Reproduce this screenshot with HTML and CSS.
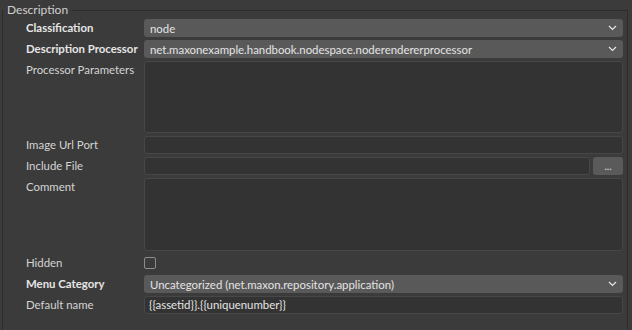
FILE: index.html
```html
<!DOCTYPE html>
<html lang="en">
<head>
<meta charset="UTF-8">
<meta name="viewport" content="width=device-width, initial-scale=1.0">
<link rel="stylesheet" href="styles.css">
</head>
<body>
    <fieldset class="group">
        <legend>Description</legend>
        <div class="form">
            <div class="label bold">Classification</div>
            <div class="select"><span>node</span><svg class="chev" width="9" height="6" viewBox="0 0 9 6"><polyline points="1,1 4.5,4.5 8,1" /></svg></div>

            <div class="label bold">Description Processor</div>
            <div class="select"><span>net.maxonexample.handbook.nodespace.noderendererprocessor</span><svg class="chev" width="9" height="6" viewBox="0 0 9 6"><polyline points="1,1 4.5,4.5 8,1" /></svg></div>

            <div class="label">Processor Parameters</div>
            <div class="area area-params"></div>

            <div class="label">Image Url Port</div>
            <div class="input"></div>

            <div class="label">Include File</div>
            <div class="file-row">
                <div class="input"></div>
                <div class="btn">...</div>
            </div>

            <div class="label">Comment</div>
            <div class="area area-comment"></div>

            <div class="label">Hidden</div>
            <div class="check-cell"><div class="check"></div></div>

            <div class="label bold">Menu Category</div>
            <div class="select"><span>Uncategorized (net.maxon.repository.application)</span><svg class="chev" width="9" height="6" viewBox="0 0 9 6"><polyline points="1,1 4.5,4.5 8,1" /></svg></div>

            <div class="label">Default name</div>
            <div class="input"><span>{{assetid}}.{{uniquenumber}}</span></div>
        </div>
    </fieldset>
</body>
</html>
```

FILE: styles.css
```css
body {
    margin: 0;
    height: 330px;
    overflow: hidden;
    background-color: #3b3b3b;
    color: #d9d9d9;
    font-family: Lato, "Noto Sans", Arial, sans-serif;
    font-size: 11.4px;
}

.group {
    margin: 3px 4px 0 2px;
    padding: 2px 4px 40px 23px;
    border: 1px solid #2c2c2c;
    min-width: 0;
}

.group legend {
    margin-left: -23px;
    padding: 0 4px;
    line-height: 14px;
    font-size: 12px;
    color: #cfcfcf;
}

.form {
    display: grid;
    grid-template-columns: 118px 479px;
    row-gap: 3px;
}

.label {
    height: 18px;
    line-height: 18px;
    white-space: nowrap;
    color: #d4d4d4;
}

.bold {
    font-weight: bold;
    color: #e6e6e6;
}

.select {
    height: 18px;
    background-color: #595959;
    border-radius: 3px;
    display: flex;
    align-items: center;
    justify-content: space-between;
    padding: 0 6px 0 6px;
    color: #e4e4e4;
    white-space: nowrap;
}

.chev polyline {
    fill: none;
    stroke: #e6e6e6;
    stroke-width: 1.2;
}

.input,
.area {
    box-sizing: border-box;
    background-color: #333333;
    border: 1px solid #474747;
    border-radius: 3px;
}

.input {
    height: 18px;
    line-height: 16px;
    padding: 0 4px;
    color: #e4e4e4;
}

.area-params {
    height: 72px;
}

.area-comment {
    height: 73px;
}

.file-row {
    display: flex;
    gap: 3px;
}

.file-row .input {
    flex: 1;
}

.btn {
    width: 30px;
    height: 18px;
    background-color: #5a5a5a;
    border-radius: 3px;
    text-align: center;
    line-height: 18px;
    font-size: 10px;
    font-weight: bold;
    color: #d0d0d0;
}

.check-cell {
    height: 18px;
    display: flex;
    align-items: center;
}

.check {
    width: 10px;
    height: 10px;
    border: 1px solid #8c8c8c;
    border-radius: 2px;
}
```
